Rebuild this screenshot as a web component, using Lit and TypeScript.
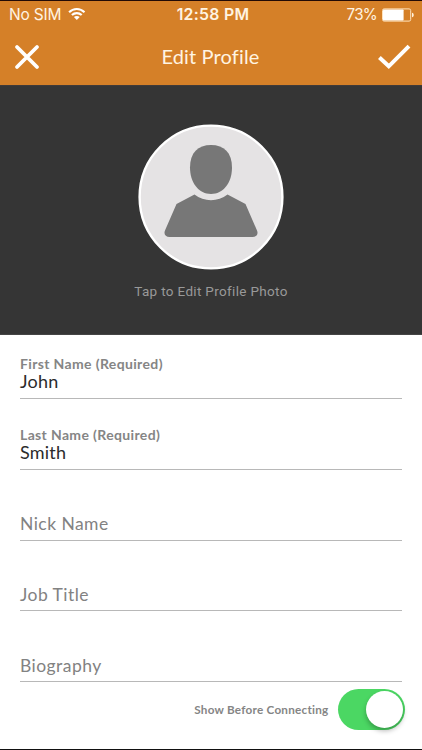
import { LitElement, html, css, nothing } from "lit";
import { customElement, property, state } from "lit/decorators.js";

@customElement("status-bar")
class StatusBar extends LitElement {
  static styles = css`
    :host {
      display: grid;
      grid-template-columns: 1fr auto 1fr;
      align-items: center;
      height: 27px;
      padding: 0 8px 0 9px;
      color: #fff4e2;
      font: 400 16px/20px Inter, sans-serif;
    }
    .side { display: flex; align-items: center; }
    .right { justify-content: flex-end; }
    .carrier { font-size: 15.5px; letter-spacing: -0.2px; padding-top: 1px; }
    .wifi { margin: -2px 0 0 7px; }
    .time { font-weight: 600; font-size: 15.8px; letter-spacing: 0.3px; padding: 1px 0 0 3px; }
    .percent { font-size: 15.2px; letter-spacing: -0.75px; margin-right: 5px; padding-top: 1px; }
  `;

  render() {
    return html`
      <div class="side">
        <span class="carrier">No SIM</span>
        <svg class="wifi" width="18" height="14" viewBox="0 0 18 14" fill="none" stroke="#fff" stroke-width="2.1">
          <path d="M1.1 5.2C5.4.9 12.2.9 16.5 5.2" />
          <path d="M3.9 8.1C6.7 5.4 10.9 5.4 13.7 8.1" />
          <path d="M8.8 13 5.9 10.1C7.5 8.6 10.1 8.6 11.7 10.1Z" fill="#fff" stroke="none" />
        </svg>
      </div>
      <span class="time">12:58 PM</span>
      <div class="side right">
        <span class="percent">73%</span>
        <svg width="32" height="14" viewBox="0 0 32 14">
          <rect x=".5" y=".9" width="28.2" height="12.2" rx="1.6" fill="none" stroke="#ffe3bd" />
          <rect x="1" y="1.4" width="20.6" height="11.2" rx=".8" fill="#fff" />
          <path d="M30 4.7C32.3 5.2 32.3 8.8 30 9.3Z" fill="#fff1dc" />
        </svg>
      </div>
    `;
  }
}

@customElement("profile-field")
class ProfileField extends LitElement {
  @property() label = "";
  @property() value = "";

  static styles = css`
    :host {
      display: flex;
      flex-direction: column;
      justify-content: flex-end;
      box-sizing: border-box;
      height: 70.75px;
      border-bottom: 1px solid #b8b8b8;
      font-family: Lato, sans-serif;
      font-variant-ligatures: none;
    }
    .label { font-weight: 700; font-size: 14px; line-height: 17px; color: #858585; letter-spacing: 0.36px; }
    .value { font-size: 18px; line-height: 19px; color: #2b2b2b; letter-spacing: 0.2px; padding-bottom: 7px; }
    .placeholder { font-size: 17.5px; line-height: 21px; color: #828282; letter-spacing: 0.45px; padding-bottom: 5.5px; }
  `;

  render() {
    return html`
      ${this.value ? html`<span class="label">${this.label}</span>` : nothing}
      <span class=${this.value ? "value" : "placeholder"}>${this.value || this.label}</span>
    `;
  }
}

@customElement("app-root")
class AppRoot extends LitElement {
  @state() private visible = true;

  private fields = [
    { label: "First Name (Required)", value: "John" },
    { label: "Last Name (Required)", value: "Smith" },
    { label: "Nick Name", value: "" },
    { label: "Job Title", value: "" },
    { label: "Biography", value: "" },
  ];

  static styles = css`
    :host {
      display: flex;
      flex-direction: column;
      box-sizing: border-box;
      width: 422px;
      height: 750px;
      border-top: 1px solid #220a05;
      border-bottom: 1px solid #111;
      background: #fff;
      overflow: hidden;
      font-family: Lato, sans-serif;
      font-variant-ligatures: none;
    }
    .header { height: 84px; background: #d58028; flex: none; }
    .nav {
      display: grid;
      grid-template-columns: 1fr auto 1fr;
      align-items: center;
      height: 57px;
      padding: 0 11px 0 14px;
    }
    .title { color: #fff4e2; font-size: 20px; line-height: 24px; letter-spacing: 0.15px; margin: -2px 4px 0 0; }
    .check { justify-self: end; }
    .photo {
      display: flex;
      flex-direction: column;
      align-items: center;
      flex: none;
      box-sizing: border-box;
      height: 250px;
      padding-top: 38px;
      background: #353535;
      border-top: 1px solid #403a38;
      border-bottom: 1px solid #454545;
    }
    .hint {
      margin-top: 13px;
      font: 400 13.5px/17px Roboto, sans-serif;
      letter-spacing: 0.33px;
      color: #999;
    }
    .form { padding: 0 20px; flex: none; margin-top: -6.6px; }
    .toggle-row {
      display: flex;
      align-items: center;
      justify-content: flex-end;
      padding: 7px 17.5px 0 0;
      gap: 9px;
    }
    .toggle-label {
      font-weight: 700;
      font-size: 11.7px;
      line-height: 14px;
      letter-spacing: 0.25px;
      color: #858585;
      padding-bottom: 2px;
    }
    .switch {
      display: flex;
      justify-content: flex-end;
      box-sizing: border-box;
      width: 67px;
      height: 41px;
      padding: 2px;
      border: 0;
      border-radius: 21px;
      background: #4bd763;
    }
    .off { justify-content: flex-start; background: #ddd; }
    .knob {
      width: 37px;
      height: 37px;
      border-radius: 50%;
      background: #fff;
      box-shadow: 0 3px 5px rgba(0, 0, 0, 0.28);
    }
  `;

  render() {
    return html`
      <div class="header">
        <status-bar></status-bar>
        <div class="nav">
          <svg width="26" height="26" viewBox="0 0 26 26" stroke="#fff" stroke-width="3.8" stroke-linecap="round">
            <path d="M3 3 23 23M23 3 3 23" />
          </svg>
          <span class="title">Edit Profile</span>
          <svg class="check" width="34" height="26" viewBox="0 0 34 26" fill="none" stroke="#fff" stroke-width="4">
            <path d="M2.4 13.5 11.8 22.3 32 2.2" />
          </svg>
        </div>
      </div>
      <div class="photo">
        <svg width="146" height="146" viewBox="0 0 146 146">
          <circle cx="73" cy="73" r="71.4" fill="#e5e3e4" stroke="#fff" stroke-width="2.4" />
          <g fill="#777">
            <path d="M73 21C86 21 94 28.5 94 43.5C94 59 85 70 73 70C61 70 52 59 52 43.5C52 28.5 60 21 73 21Z" />
            <path d="M56.5 70.5C66 78 80 78 89.5 70.5L107.5 80L118.8 106C120.8 110 118.5 113 114.5 113H31.5C27.5 113 25.2 110 27.2 106L38.5 80Z" />
          </g>
        </svg>
        <span class="hint">Tap to Edit Profile Photo</span>
      </div>
      <div class="form">
        ${this.fields.map((f) => html`<profile-field .label=${f.label} .value=${f.value}></profile-field>`)}
      </div>
      <div class="toggle-row">
        <span class="toggle-label">Show Before Connecting</span>
        <button
          class=${this.visible ? "switch" : "switch off"}
          aria-label="Show Before Connecting"
          @click=${() => (this.visible = !this.visible)}
        ><span class="knob"></span></button>
      </div>
    `;
  }
}
